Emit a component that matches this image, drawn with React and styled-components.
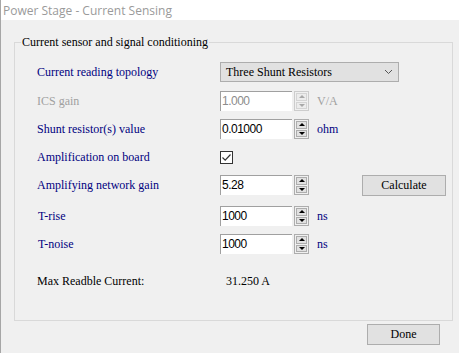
import React from "react";
import styled, { createGlobalStyle } from "styled-components";

const GlobalStyle = createGlobalStyle`
  html, body {
    margin: 0;
    padding: 0;
    background: #f0f0f0;
  }
  body {
    width: 459px;
    height: 353px;
    overflow: hidden;
  }
`;

const serif = `
  font-family: 'Liberation Serif', 'DejaVu Serif', 'Noto Serif', serif;
  font-size: 12px;
`;

const Window = styled.div`
  width: 459px;
  height: 353px;
  display: flex;
  flex-direction: column;
  border-left: 1px solid #a6a6a6;
  box-sizing: border-box;
  background: #f0f0f0;
`;

const TitleBar = styled.div`
  height: 20px;
  flex-shrink: 0;
  background: #ffffff;
  display: flex;
  align-items: center;
  padding-left: 2px;
  font-family: 'Open Sans', 'Noto Sans', sans-serif;
  font-size: 12px;
  color: #9a9a9a;
`;

const Body = styled.div`
  flex: 1;
  display: flex;
  flex-direction: column;
  padding: 15px 6px 0 13px;
`;

const GroupBox = styled.fieldset`
  margin: 0;
  padding: 0;
  height: 286px;
  box-sizing: border-box;
  border: 1px solid #d9d9d9;
  display: flex;
  flex-direction: column;
`;

const Legend = styled.legend`
  ${serif}
  margin-left: 6px;
  padding: 0 1px;
  line-height: 14px;
  color: #000;
`;

const Rows = styled.div`
  display: flex;
  flex-direction: column;
  padding-left: 22px;
`;

const Row = styled.div`
  display: flex;
  align-items: center;
  height: 20px;
  margin-top: ${(p) => p.$mt}px;
`;

const Label = styled.div`
  ${serif}
  width: ${(p) => 183 - (p.$indent || 0)}px;
  padding-left: ${(p) => p.$indent || 0}px;
  flex-shrink: 0;
  white-space: nowrap;
  color: ${(p) => (p.$muted ? "#a0a0a0" : p.$plain ? "#000000" : "#000080")};
`;

const Combo = styled.div`
  ${serif}
  width: 179px;
  height: 20px;
  box-sizing: border-box;
  border: 1px solid #adadad;
  background: #e1e1e1;
  display: flex;
  align-items: center;
  justify-content: space-between;
  padding: 0 5px;
  color: #000;
`;

const SpinField = styled.div`
  display: flex;
  align-items: stretch;
  height: 20px;
  width: 89px;
  gap: 2px;
  flex-shrink: 0;
`;

const Input = styled.div`
  width: 72px;
  box-sizing: border-box;
  background: #ffffff;
  border-top: 1px solid #a0a0a0;
  border-left: 1px solid #a0a0a0;
  padding-left: 1px;
  font-family: 'Liberation Sans', Arial, sans-serif;
  font-size: 12px;
  letter-spacing: -0.5px;
  line-height: 18px;
  color: ${(p) => (p.$disabled ? "#8c8c8c" : "#000")};
`;

const Spinner = styled.div`
  width: 15px;
  display: flex;
  flex-direction: column;
  box-sizing: border-box;
  border: 1px solid ${(p) => (p.$disabled ? "#cccccc" : "#adadad")};
  background: #f0f0f0;
  padding: 1px;
  gap: 1px;
`;

const SpinButton = styled.div`
  flex: 1;
  background: ${(p) => (p.$disabled ? "#ececec" : "#e1e1e1")};
  border: 1px solid ${(p) => (p.$disabled ? "#d4d4d4" : "#adadad")};
  display: flex;
  align-items: center;
  justify-content: center;
`;

const Arrow = styled.div`
  width: 0;
  height: 0;
  border-left: 3px solid transparent;
  border-right: 3px solid transparent;
  ${(p) => (p.$up ? "border-bottom" : "border-top")}: 3px solid
    ${(p) => (p.$disabled ? "#a8a8a8" : "#000")};
`;

const Unit = styled.div`
  ${serif}
  width: 53px;
  padding-left: 8px;
  box-sizing: border-box;
  color: ${(p) => (p.$muted ? "#a0a0a0" : "#000080")};
`;

const CheckBox = styled.div`
  width: 13px;
  height: 13px;
  box-sizing: border-box;
  border: 1px solid #333333;
  background: #ffffff;
  display: flex;
  align-items: center;
  justify-content: center;
`;

const Button = styled.div`
  ${serif}
  width: ${(p) => p.$w}px;
  height: ${(p) => p.$h}px;
  box-sizing: border-box;
  border: 1px solid #adadad;
  background: #e1e1e1;
  display: flex;
  align-items: center;
  justify-content: center;
  color: #000;
`;

const Value = styled.div`
  ${serif}
  color: #000;
  padding-left: 3px;
`;

const Footer = styled.div`
  display: flex;
  justify-content: flex-end;
  padding-top: 3px;
  padding-right: 13px;
`;

const Spin = ({ value, disabled }) => (
  <SpinField>
    <Input $disabled={disabled}>{value}</Input>
    <Spinner $disabled={disabled}>
      <SpinButton $disabled={disabled}>
        <Arrow $up $disabled={disabled} />
      </SpinButton>
      <SpinButton $disabled={disabled}>
        <Arrow $disabled={disabled} />
      </SpinButton>
    </Spinner>
  </SpinField>
);

const App = () => {
  return (
    <Window>
      <GlobalStyle />
      <TitleBar>{"Power Stage - Current Sensing"}</TitleBar>
      <Body>
        <GroupBox>
          <Legend>{"Current sensor and signal conditioning"}</Legend>
          <Rows>
            <Row $mt={13}>
              <Label>{"Current reading topology"}</Label>
              <Combo>
                <span>{"Three Shunt Resistors"}</span>
                <svg width="9" height="6" viewBox="0 0 9 6">
                  <path d="M1 1 L4.5 4.5 L8 1" fill="none" stroke="#555" strokeWidth="1" />
                </svg>
              </Combo>
            </Row>
            <Row $mt={9}>
              <Label $muted>{"ICS gain"}</Label>
              <Spin value="1.000" disabled />
              <Unit $muted>{"V/A"}</Unit>
            </Row>
            <Row $mt={8}>
              <Label>{"Shunt resistor(s) value"}</Label>
              <Spin value="0.01000" />
              <Unit>{"ohm"}</Unit>
            </Row>
            <Row $mt={8}>
              <Label>{"Amplification on board"}</Label>
              <CheckBox>
                <svg width="11" height="11" viewBox="0 0 11 11">
                  <path d="M1.5 5.5 L4.2 8.2 L9.5 2.5" fill="none" stroke="#333" strokeWidth="1.2" />
                </svg>
              </CheckBox>
            </Row>
            <Row $mt={8}>
              <Label>{"Amplifying network gain"}</Label>
              <Spin value="5.28" />
              <Unit />
              <Button $w={84} $h={21}>{"Calculate"}</Button>
            </Row>
            <Row $mt={11}>
              <Label $indent={1}>{"T-rise"}</Label>
              <Spin value="1000" />
              <Unit>{"ns"}</Unit>
            </Row>
            <Row $mt={8}>
              <Label $indent={1}>{"T-noise"}</Label>
              <Spin value="1000" />
              <Unit>{"ns"}</Unit>
            </Row>
            <Row $mt={17}>
              <Label $plain $indent={-3}>{"Max Readble Current:"}</Label>
              <Value>{"31.250 A"}</Value>
            </Row>
          </Rows>
        </GroupBox>
        <Footer>
          <Button $w={73} $h={21}>{"Done"}</Button>
        </Footer>
      </Body>
    </Window>
  );
};

export default App;
